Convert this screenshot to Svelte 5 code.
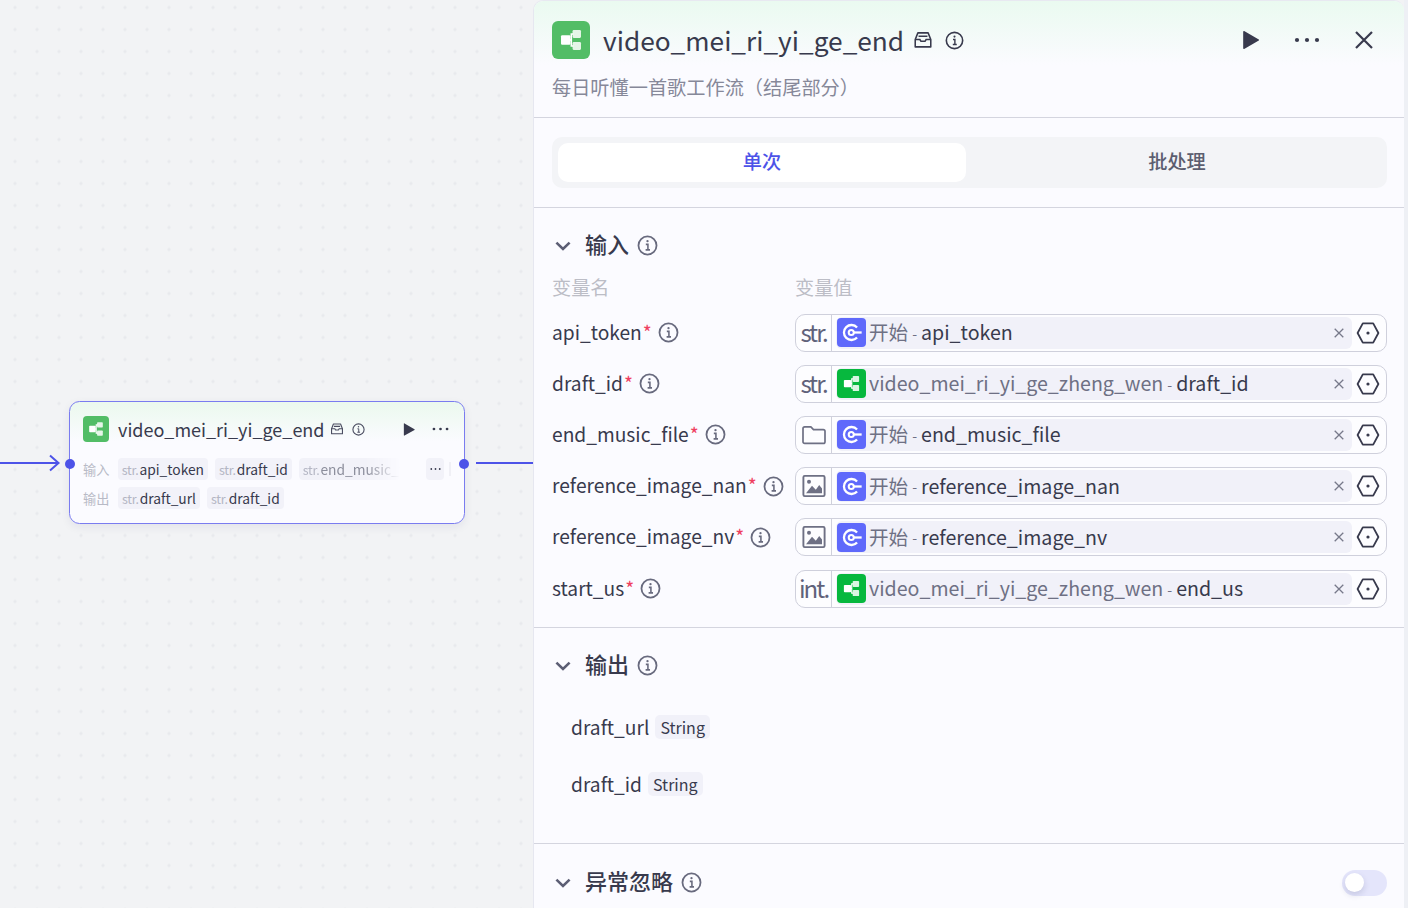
<script>
  const inputs = [
    { name: 'api_token', type: 'str.', source: 'start', key: 'api_token' },
    { name: 'draft_id', type: 'str.', source: 'flow', key: 'draft_id' },
    { name: 'end_music_file', type: 'folder', source: 'start', key: 'end_music_file' },
    { name: 'reference_image_nan', type: 'image', source: 'start', key: 'reference_image_nan' },
    { name: 'reference_image_nv', type: 'image', source: 'start', key: 'reference_image_nv' },
    { name: 'start_us', type: 'int.', source: 'flow', key: 'end_us' }
  ];
  const outputs = ['draft_url', 'draft_id'];
</script>

{#snippet info(size)}
  <svg class="info" width={size} height={size} viewBox="0 0 20 20" fill="none" stroke="currentColor">
    <circle cx="10" cy="10" r="8.6" stroke-width="1.7" />
    <path d="M8.4 8.9h2v5.2M8.2 14.2h4.2" stroke-width="1.5" />
    <circle cx="10" cy="5.9" r="1.1" fill="currentColor" stroke="none" />
  </svg>
{/snippet}

{#snippet inbox(size)}
  <svg width={size} height={size} viewBox="0 0 18 18" fill="none" stroke="currentColor" stroke-width="1.4">
    <path d="M4.4 2.6h9.2l2.4 6v6.6H2V8.6z" stroke-linejoin="round" />
    <path d="M2 8.6h4.2l1 1.6h3.6l1-1.6H16M5 5.6h8" />
  </svg>
{/snippet}

{#snippet flowIcon(size)}
  <svg width={size} height={size} viewBox="0 0 24 24" fill="#fff">
    <rect x="5.7" y="9" width="6" height="6" rx="0.7" />
    <rect x="13" y="5.700" width="5.300" height="5" rx="0.7" opacity="0.85" />
    <rect x="13" y="13.300" width="5.300" height="5" rx="0.7" opacity="0.85" />
    <path d="M11 12h1.200V8.200h1.300M12.200 12v3.800h1.300" fill="none" stroke="#fff" stroke-width="1" />
  </svg>
{/snippet}

{#snippet startIcon(size)}
  <svg width={size} height={size} viewBox="0 0 24 24" fill="none" stroke="#fff">
    <path d="M16.6 7.9a6.2 6.2 0 1 0 0 8.2" stroke-width="1.9" />
    <circle cx="11.8" cy="12" r="2.1" stroke-width="1.7" />
    <path d="M13.4 12h7" stroke-width="1.9" />
  </svg>
{/snippet}

{#snippet play(size)}
  <svg width={size} height={size} viewBox="0 0 20 20" fill="currentColor">
    <path d="M3.8 2.4v15.2c0 .5.5.7.9.5L18 10.5c.4-.2.4-.8 0-1L4.7 1.9c-.4-.2-.9 0-.9.5z" />
  </svg>
{/snippet}

{#snippet dots(w)}
  <svg width={w} height="6" viewBox="0 0 26 6" fill="currentColor">
    <circle cx="3" cy="3" r="2.1" /><circle cx="13" cy="3" r="2.1" /><circle cx="23" cy="3" r="2.1" />
  </svg>
{/snippet}

{#snippet chevron()}
  <svg class="chevron" width="22" height="22" viewBox="0 0 22 22" fill="none" stroke="currentColor" stroke-width="2.6">
    <path d="M4.4 7.6 11 14l6.6-6.4" />
  </svg>
{/snippet}

{#snippet typeIcon(type)}
  {#if type === 'folder'}
    <svg width="26" height="26" viewBox="0 0 26 26" fill="none" stroke="currentColor" stroke-width="1.7">
      <path d="M2 6.6c0-1 .7-1.7 1.7-1.7h6.2l2.6 2.7h9.8c1 0 1.7.7 1.7 1.7v10.4c0 1-.7 1.7-1.7 1.7H3.7c-1 0-1.7-.7-1.7-1.7z" stroke-linejoin="round" />
    </svg>
  {:else if type === 'image'}
    <svg width="26" height="26" viewBox="0 0 26 26" fill="none">
      <rect x="2.4" y="2.9" width="21.2" height="20.2" rx="1.3" stroke="currentColor" stroke-width="1.9" />
      <circle cx="8" cy="8.7" r="2" fill="currentColor" />
      <path d="M5 20.2 11 12.7l3.8 4.1 3.4-4.8 2.8 3.4v4.8z" fill="currentColor" />
    </svg>
  {:else}
    <span class="type-text">{type}</span>
  {/if}
{/snippet}

<div class="page">
  <div class="canvas">
    <div class="edge edge-in">
      <svg width="62" height="22" viewBox="0 0 62 22" fill="none" stroke="#4d53e8" stroke-width="2">
        <path d="M0 11h58M50 3.5 58.5 11 50 18.5" />
      </svg>
    </div>
    <div class="edge edge-out"></div>

    <div class="node">
      <span class="port port-l"></span>
      <span class="port port-r"></span>
      <div class="node-head">
        <div class="badge node-badge">{@render flowIcon(26)}</div>
        <span class="node-title">video_mei_ri_yi_ge_end</span>
        <span class="node-small">{@render inbox(14)}</span>
        <span class="node-small node-info">{@render info(13)}</span>
        <span class="node-play">{@render play(15)}</span>
        <span class="node-more">{@render dots(17)}</span>
      </div>
      <div class="node-row">
        <span class="node-label">输入</span>
        <span class="chip"><i>str.</i>api_token</span>
        <span class="chip"><i>str.</i>draft_id</span>
        <span class="chip chip-fade"><i>str.</i>end_music_f</span>
        <span class="chip-more">{@render dots(11)}</span>
        <span class="chip-peek"></span>
      </div>
      <div class="node-row">
        <span class="node-label">输出</span>
        <span class="chip"><i>str.</i>draft_url</span>
        <span class="chip"><i>str.</i>draft_id</span>
      </div>
    </div>
  </div>

  <aside class="panel">
    <header class="panel-head">
      <div class="title-row">
        <div class="badge panel-badge">{@render flowIcon(38)}</div>
        <h1>video_mei_ri_yi_ge_end</h1>
        <span class="title-inbox">{@render inbox(20)}</span>
        <span class="title-info">{@render info(19)}</span>
        <div class="actions">
          <span class="act-play">{@render play(22)}</span>
          <span class="act-more">{@render dots(26)}</span>
          <svg class="act-close" width="20" height="20" viewBox="0 0 20 20" stroke="currentColor" stroke-width="2.2">
            <path d="M2 2l16 16M18 2 2 18" />
          </svg>
        </div>
      </div>
      <p class="desc">每日听懂一首歌工作流（结尾部分）</p>
    </header>

    <div class="tabs-wrap">
      <div class="tabs">
        <div class="tab active">单次</div>
        <div class="tab other">批处理</div>
      </div>
    </div>

    <section class="sec sec-input">
      <div class="sec-title">
        {@render chevron()}
        <h2>输入</h2>
        {@render info(21)}
      </div>
      <div class="grid-head">
        <span>变量名</span>
        <span>变量值</span>
      </div>
      {#each inputs as row}
        <div class="row">
          <div class="row-name">
            <span class="name-text">{row.name}</span><em>*</em>
            {@render info(21)}
          </div>
          <div class="field">
            <div class="type">{@render typeIcon(row.type)}</div>
            <div class="ref">
              {#if row.source === 'start'}
                <div class="ref-icon start">{@render startIcon(29)}</div>
                <span class="ref-src">开始</span>
              {:else}
                <div class="ref-icon flow">{@render flowIcon(29)}</div>
                <span class="ref-src">video_mei_ri_yi_ge_zheng_wen</span>
              {/if}
              <span class="ref-sep">-</span>
              <span class="ref-key">{row.key}</span>
              <svg class="ref-x" width="10" height="10" viewBox="0 0 10 10" stroke="currentColor" stroke-width="1.3">
                <path d="M.7.7l8.6 8.6M9.3.7.7 9.3" />
              </svg>
            </div>
            <svg class="hex" width="24" height="24" viewBox="0 0 24 24" fill="none" stroke="currentColor" stroke-width="1.8">
              <path d="M6.8 2.4h10.400L22.400 12l-5.200 9.600H6.800L1.600 12z" stroke-linejoin="round" />
              <circle cx="12" cy="12" r="1.600" fill="currentColor" stroke="none" />
            </svg>
          </div>
        </div>
      {/each}
    </section>

    <section class="sec sec-output">
      <div class="sec-title">
        {@render chevron()}
        <h2>输出</h2>
        {@render info(21)}
      </div>
      {#each outputs as name}
        <div class="out-row">
          <span>{name}</span>
          <span class="out-tag">String</span>
        </div>
      {/each}
    </section>

    <section class="sec sec-ignore">
      <div class="sec-title">
        {@render chevron()}
        <h2>异常忽略</h2>
        {@render info(21)}
        <span class="switch"><span class="knob"></span></span>
      </div>
    </section>
  </aside>
  <div class="gutter"></div>
</div>

<style>
  :global(body) {
    margin: 0;
    background: #f2f3f5;
    overflow: hidden;
  }

  .page {
    display: flex;
    width: 1408px;
    height: 908px;
    overflow: hidden;
    font-family: "Noto Sans CJK SC", "Noto Sans", sans-serif;
    color: #383a4d;
  }

  svg {
    display: block;
    flex: none;
  }

  .canvas {
    position: relative;
    width: 533px;
    flex: none;
    background-image: radial-gradient(circle, #e8e9ed 1.3px, transparent 1.8px);
    background-size: 22px 22px;
    background-position: 4px -3.5px;
  }

  .gutter {
    flex: 1;
    background: #eef0f5;
  }

  .edge {
    position: absolute;
  }

  .edge-in {
    left: 0;
    top: 452px;
  }

  .edge-out {
    left: 476px;
    top: 462px;
    width: 57px;
    height: 2px;
    background: #4d53e8;
  }

  .node {
    position: absolute;
    left: 69px;
    top: 401px;
    width: 396px;
    height: 123px;
    box-sizing: border-box;
    padding: 14px 13px 0;
    border: 1px solid #7a7cf0;
    border-radius: 10.5px;
    background: linear-gradient(#ebf9ee, #fbfbff 40px);
    box-shadow: 0 3px 10px rgba(30, 35, 80, 0.07);
  }

  .port {
    position: absolute;
    top: 56.5px;
    width: 10px;
    height: 10px;
    border-radius: 50%;
    background: #4d53e8;
  }

  .port-l {
    left: -5px;
  }

  .port-r {
    right: -5px;
  }

  .badge {
    display: flex;
    align-items: center;
    justify-content: center;
    background: #52bd66;
  }

  .node-badge {
    width: 26px;
    height: 26px;
    border-radius: 4px;
  }

  .node-head {
    display: flex;
    align-items: center;
    height: 26px;
  }

  .node-title {
    margin-left: 9px;
    font-size: 18px;
    line-height: 26px;
    white-space: nowrap;
  }

  .node-small {
    margin-left: 5px;
    color: #4a4c60;
  }

  .node-info {
    margin-left: 8px;
  }

  .node-play {
    margin-left: auto;
    margin-right: 16px;
    color: #383a4d;
  }

  .node-more {
    margin-right: 2px;
    color: #383a4d;
  }

  .node-row {
    display: flex;
    align-items: center;
    gap: 7px;
    height: 22px;
    margin-top: 7px;
  }

  .node-head + .node-row {
    margin-top: 16px;
  }

  .node-label {
    width: 28px;
    font-size: 13.2px;
    color: #b8bac6;
    white-space: nowrap;
  }

  .chip {
    display: flex;
    align-items: center;
    height: 22px;
    box-sizing: border-box;
    padding: 1px 4px 0;
    border-radius: 4px;
    background: #f2f2f9;
    font-size: 13.8px;
    line-height: 21px;
    white-space: nowrap;
    color: #383a4d;
  }

  .chip i {
    margin-right: 1px;
    font-style: normal;
    font-size: 12.5px;
    letter-spacing: -0.3px;
    color: #b4b6c4;
  }

  .chip-fade {
    width: 104px;
    overflow: hidden;
    color: #8c8e9c;
    -webkit-mask-image: linear-gradient(90deg, #000 65%, transparent 98%);
    mask-image: linear-gradient(90deg, #000 65%, transparent 98%);
  }

  .chip-more {
    display: flex;
    align-items: center;
    justify-content: center;
    width: 18px;
    height: 22px;
    margin-left: 17px;
    border-radius: 4px;
    background: #f2f2f9;
    color: #383a4d;
  }

  .chip-peek {
    width: 2px;
    height: 14px;
    margin-left: -2px;
    background: #f0f0f6;
  }

  .panel {
    width: 871px;
    flex: none;
    height: 908px;
    box-sizing: border-box;
    border-top: 1px solid #e8e9f1;
    border-left: 1px solid #e6e7f0;
    border-top-left-radius: 10px;
    border-top-right-radius: 10px;
    background: #fbfbff;
    overflow: hidden;
  }

  .panel-head {
    height: 117px;
    box-sizing: border-box;
    padding: 20px 18px 0;
    border-bottom: 1px solid #d4d5df;
    background: linear-gradient(#eafaf0, #fbfbff 64px);
  }

  .title-row {
    display: flex;
    align-items: center;
    height: 38px;
  }

  .panel-badge {
    width: 38px;
    height: 38px;
    border-radius: 6px;
  }

  h1 {
    margin: 0 0 0 13px;
    font-size: 26.25px;
    font-weight: 400;
    line-height: 38px;
    white-space: nowrap;
  }

  .title-inbox {
    margin-left: 9px;
    color: #383a4d;
  }

  .title-info {
    margin-left: 12px;
    color: #383a4d;
  }

  .actions {
    display: flex;
    align-items: center;
    margin-left: auto;
    margin-right: 12px;
    color: #383a4d;
  }

  .act-more {
    margin-left: 33px;
  }

  .act-close {
    margin-left: 34px;
  }

  .desc {
    margin: 18px 0 0;
    font-size: 19.2px;
    line-height: 20px;
    color: #868899;
  }

  .tabs-wrap {
    height: 90px;
    box-sizing: border-box;
    padding: 19px 17px 0 18px;
    border-bottom: 1px solid #d4d5df;
  }

  .tabs {
    display: flex;
    height: 51px;
    box-sizing: border-box;
    padding: 6px;
    border-radius: 10px;
    background: #f3f4f7;
  }

  .tab {
    display: flex;
    align-items: center;
    justify-content: center;
    box-sizing: border-box;
    padding-bottom: 3px;
    border-radius: 10px;
    font-size: 19.2px;
    font-weight: 500;
    color: #5c5e70;
  }

  .active {
    width: 408px;
    flex: none;
    background: #fff;
    color: #4d53e8;
  }

  .other {
    flex: 1;
    padding-left: 7px;
  }

  .sec {
    box-sizing: border-box;
    padding: 0 17px 0 18px;
    border-bottom: 1px solid #d4d5df;
  }

  .sec-input {
    height: 420px;
    padding-top: 24px;
  }

  .sec-output {
    height: 216px;
    padding-top: 24px;
  }

  .sec-ignore {
    border-bottom: 0;
    padding-top: 25px;
  }

  .sec-title {
    display: flex;
    align-items: center;
    height: 27px;
  }

  .sec-title :global(.info) {
    color: #686a7e;
  }

  .chevron {
    color: #5c5e74;
    margin-right: 11px;
  }

  h2 {
    margin: 0 8px 4px 0;
    font-size: 22px;
    font-weight: 500;
    line-height: 27px;
    color: #383a4d;
  }

  .grid-head {
    display: grid;
    grid-template-columns: 243px 1fr;
    margin-top: 15px;
    height: 27px;
    line-height: 27px;
    font-size: 19.2px;
    color: #bcbdc6;
  }

  .row {
    display: grid;
    grid-template-columns: 243px 1fr;
    align-items: center;
    height: 51.2px;
  }

  .grid-head + .row {
    margin-top: 6px;
  }

  .row-name {
    display: flex;
    align-items: center;
    font-size: 19.2px;
    white-space: nowrap;
    color: #383a4d;
  }

  .name-text {
    padding-bottom: 2px;
  }

  .row-name em {
    margin-left: 1px;
    padding-bottom: 2px;
    font-style: normal;
    font-size: 19.2px;
    color: #ef4060;
  }

  .row-name :global(.info) {
    margin-left: 6px;
    color: #686a7e;
  }

  .field {
    display: flex;
    align-items: center;
    height: 38px;
    box-sizing: border-box;
    border: 1px solid #cfd0dc;
    border-radius: 10px;
    background: #fdfdff;
  }

  .type {
    display: flex;
    align-items: center;
    justify-content: center;
    width: 36px;
    height: 36px;
    flex: none;
    box-sizing: border-box;
    border-right: 1px solid #cfd0dc;
    color: #6e7084;
  }

  .type-text {
    padding-bottom: 3px;
    font-size: 24px;
    line-height: 33px;
    letter-spacing: -2px;
    color: #60627a;
  }

  .ref {
    flex: 1;
    display: flex;
    align-items: center;
    gap: 3px;
    height: 32px;
    margin-left: 4px;
    padding-left: 1px;
    border-radius: 6px;
    background: #f1f1f9;
    white-space: nowrap;
    font-size: 19.6px;
  }

  .ref-icon {
    display: flex;
    align-items: center;
    justify-content: center;
    width: 29px;
    height: 29px;
    border-radius: 4px;
  }

  .start {
    background: #5f69fb;
  }

  .flow {
    background: #07b83e;
  }

  .ref-src {
    padding-bottom: 2px;
    color: #6e7084;
  }

  .ref-sep {
    margin: 0 1px;
    font-size: 14px;
    color: #6e7084;
  }

  .ref-key {
    padding-bottom: 2px;
    color: #383a4d;
  }

  .ref-x {
    margin-left: auto;
    margin-right: 8px;
    color: #77798a;
  }

  .hex {
    margin: 0 6px 0 4px;
    color: #383a4d;
  }

  .out-row {
    display: flex;
    align-items: center;
    gap: 6px;
    height: 57px;
    margin-left: 19px;
    font-size: 19.2px;
    color: #383a4d;
  }

  .sec-title + .out-row {
    margin-top: 19px;
  }

  .out-tag {
    padding: 0 5px;
    height: 24px;
    line-height: 24px;
    border-radius: 5px;
    background: #f1f1f9;
    font-size: 16px;
  }

  .switch {
    display: block;
    position: relative;
    width: 45px;
    height: 26px;
    margin-left: auto;
    border-radius: 13px;
    background: #e4e5fb;
  }

  .knob {
    position: absolute;
    left: 3px;
    top: 3px;
    width: 19px;
    height: 19px;
    border-radius: 50%;
    background: #fff;
    box-shadow: 0 3px 6px rgba(30, 35, 80, 0.15);
  }
</style>
